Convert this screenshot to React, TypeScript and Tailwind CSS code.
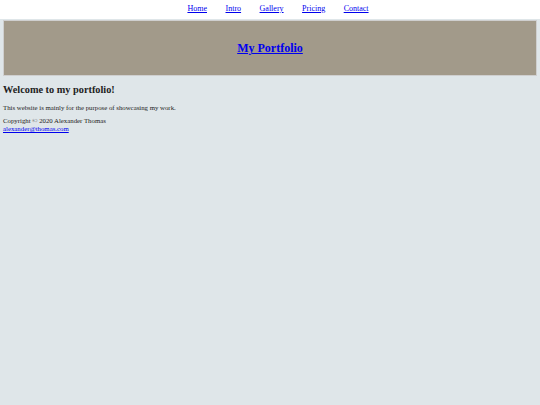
export default function App() {
  const links = ["Home", "Intro", "Gallery", "Pricing", "Contact"];

  return (
    <div className="min-h-[405px] bg-[#dfe6e9] font-['Liberation_Serif',serif] text-[#222]">
      <nav className="flex h-[19px] items-center justify-center gap-[18.5px] bg-white pb-[2px] pl-[16px] text-[8px] leading-none">
        {links.map((l) => (
          <a key={l} href="#" className="text-[#0000ee] underline">
            {l}
          </a>
        ))}
      </nav>

      <div className="px-[3px] pt-[1px]">
        <header className="flex h-[56px] items-center justify-center border border-[#cfcfcf] bg-[#a29a8a]">
          <a href="#" className="text-[12px] font-bold text-[#0000ee] underline">
            My Portfolio
          </a>
        </header>
      </div>

      <main className="px-[3px]">
        <h2 className="mt-[8px] text-[10.3px] font-bold leading-[12px]">Welcome to my portfolio!</h2>
        <p className="mt-[8px] text-[6.8px] leading-[8px]">
          This website is mainly for the purpose of showcasing my work.
        </p>
        <footer className="mt-[5px] text-[6.8px] leading-[8px]">
          <div>Copyright © 2020 Alexander Thomas</div>
          <a href="#" className="text-[#0000ee] underline">
            alexander@thomas.com
          </a>
        </footer>
      </main>
    </div>
  );
}
